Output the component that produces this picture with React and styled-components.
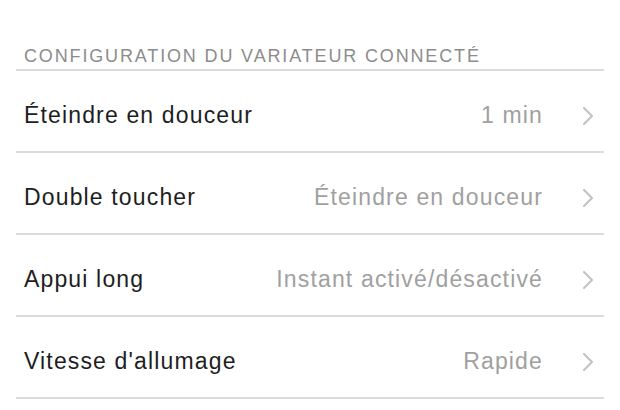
import React from "react";
import styled, { createGlobalStyle } from "styled-components";

const GlobalStyle = createGlobalStyle`
  html, body {
    margin: 0;
    padding: 0;
    background: #fff;
  }
  body {
    font-family: "Liberation Sans", Arial, sans-serif;
    -webkit-font-smoothing: antialiased;
  }
`;

const Page = styled.div`
  width: 620px;
  height: 410px;
  background: #fff;
  padding: 0 16px;
  box-sizing: border-box;
  overflow: hidden;
`;

const SectionHeader = styled.div`
  height: 71px;
  display: flex;
  align-items: flex-end;
  padding: 0 0 2px 8px;
  box-sizing: border-box;
  color: #8c8c8c;
  font-size: 18px;
  line-height: 22px;
  letter-spacing: 1.85px;
  border-bottom: 2px solid #dcdcdc;
`;

const List = styled.div`
  display: flex;
  flex-direction: column;
`;

const Row = styled.div`
  height: 82px;
  display: flex;
  align-items: center;
  padding: 9px 10px 0 8px;
  box-sizing: border-box;
  border-bottom: 2px solid #dcdcdc;
`;

const Label = styled.span`
  flex: 1;
  color: #1e1e1e;
  font-size: 23px;
  letter-spacing: 1.15px;
`;

const Value = styled.span`
  color: #a0a0a0;
  font-size: 23px;
  letter-spacing: 1.15px;
  margin-right: 39px;
`;

const Chevron = () => (
  <svg width="12" height="20" viewBox="0 0 12 20">
    <path
      d="M2 2 L10 10 L2 18"
      fill="none"
      stroke="#c4c4c8"
      strokeWidth="2.2"
      strokeLinecap="round"
      strokeLinejoin="round"
    />
  </svg>
);

const settings = [
  { label: "Éteindre en douceur", value: "1 min" },
  { label: "Double toucher", value: "Éteindre en douceur" },
  { label: "Appui long", value: "Instant activé/désactivé" },
  { label: "Vitesse d'allumage", value: "Rapide" }
];

function App() {
  return (
    <Page>
      <GlobalStyle />
      <SectionHeader>CONFIGURATION DU VARIATEUR CONNECTÉ</SectionHeader>
      <List>
        {settings.map(item => (
          <Row key={item.label}>
            <Label>{item.label}</Label>
            <Value>{item.value}</Value>
            <Chevron />
          </Row>
        ))}
      </List>
    </Page>
  );
}

export default App;
